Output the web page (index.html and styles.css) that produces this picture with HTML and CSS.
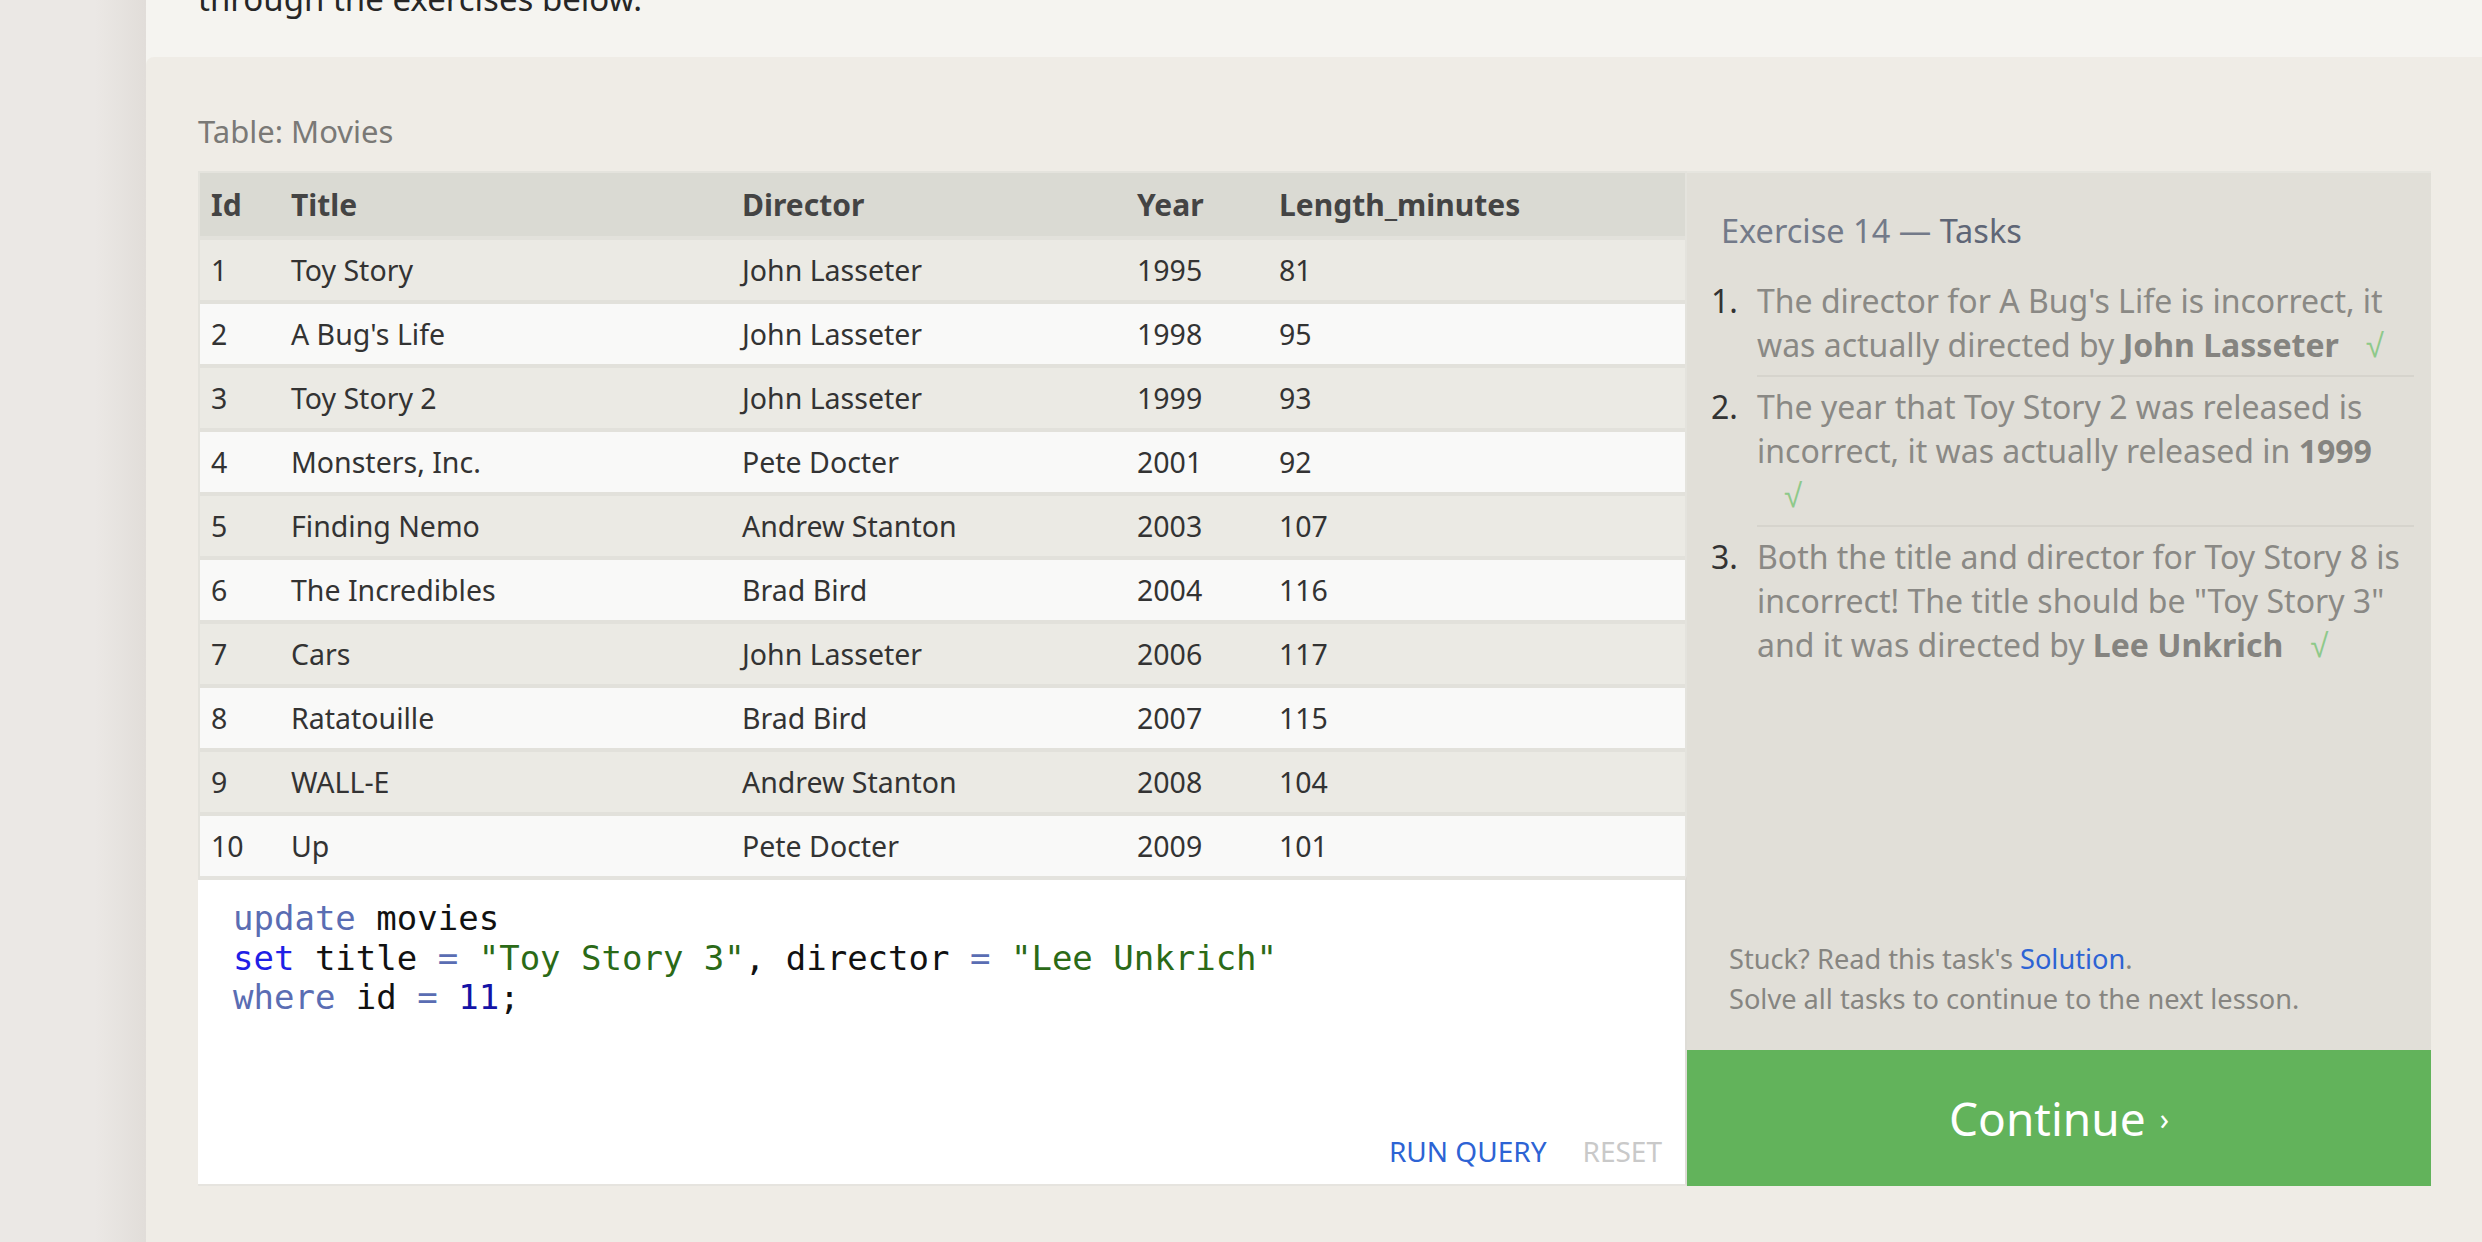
FILE: index.html
```html
<!DOCTYPE html>
<html lang="en">
<head>
<meta charset="utf-8">
<title>SQLBolt - Exercise 14</title>
<link rel="stylesheet" href="styles.css">
</head>
<body>
<div class="page">
  <aside class="sidebar"></aside>
  <main class="main">
    <section class="intro">
      <p>through the exercises below.</p>
    </section>
    <section class="exercise">
      <div class="table-label">Table: Movies</div>
      <div class="workspace">
        <div class="left">
          <table class="movies">
            <thead>
              <tr><th class="c-id">Id</th><th class="c-title">Title</th><th class="c-dir">Director</th><th class="c-year">Year</th><th class="c-len">Length_minutes</th></tr>
            </thead>
            <tbody>
              <tr><td>1</td><td>Toy Story</td><td>John Lasseter</td><td>1995</td><td>81</td></tr>
              <tr><td>2</td><td>A Bug's Life</td><td>John Lasseter</td><td>1998</td><td>95</td></tr>
              <tr><td>3</td><td>Toy Story 2</td><td>John Lasseter</td><td>1999</td><td>93</td></tr>
              <tr><td>4</td><td>Monsters, Inc.</td><td>Pete Docter</td><td>2001</td><td>92</td></tr>
              <tr><td>5</td><td>Finding Nemo</td><td>Andrew Stanton</td><td>2003</td><td>107</td></tr>
              <tr><td>6</td><td>The Incredibles</td><td>Brad Bird</td><td>2004</td><td>116</td></tr>
              <tr><td>7</td><td>Cars</td><td>John Lasseter</td><td>2006</td><td>117</td></tr>
              <tr><td>8</td><td>Ratatouille</td><td>Brad Bird</td><td>2007</td><td>115</td></tr>
              <tr><td>9</td><td>WALL-E</td><td>Andrew Stanton</td><td>2008</td><td>104</td></tr>
              <tr><td>10</td><td>Up</td><td>Pete Docter</td><td>2009</td><td>101</td></tr>
            </tbody>
          </table>
          <div class="editor">
            <pre class="code"><span class="kw">update</span> movies
<span class="kw2">set</span> title <span class="op">=</span> <span class="str">"Toy Story 3"</span>, director <span class="op">=</span> <span class="str">"Lee Unkrich"</span>
<span class="kw">where</span> id <span class="op">=</span> <span class="num">11</span>;</pre>
            <div class="actions">
              <span class="run">RUN QUERY</span>
              <span class="reset">RESET</span>
            </div>
          </div>
        </div>
        <div class="panel">
          <div class="panel-body">
            <h2 class="tasks-title">Exercise 14 — <span class="tasks-word">Tasks</span></h2>
            <ol class="tasks">
              <li><span class="n">1.</span><span class="t">The director for A Bug's Life is incorrect, it was actually directed by <b>John Lasseter</b><span class="check">√</span></span></li>
              <li><span class="n">2.</span><span class="t">The year that Toy Story 2 was released is incorrect, it was actually released in <b>1999</b><span class="check">√</span></span></li>
              <li><span class="n">3.</span><span class="t">Both the title and director for Toy Story 8 is incorrect! The title should be "Toy Story 3" and it was directed by <b>Lee Unkrich</b><span class="check">√</span></span></li>
            </ol>
          </div>
          <div class="help">
            <p>Stuck? Read this task's <a href="#">Solution</a>.</p>
            <p>Solve all tasks to continue to the next lesson.</p>
          </div>
          <a class="continue" href="#">Continue <span class="arrow">›</span></a>
        </div>
      </div>
    </section>
  </main>
</div>
</body>
</html>
```

FILE: styles.css
```css
html, body {
  margin: 0;
  padding: 0;
}

body {
  background: #efece6;
  font-family: "Noto Sans", "Liberation Sans", sans-serif;
  overflow: hidden;
}

.page {
  display: flex;
  min-height: 1242px;
}

.sidebar {
  width: 146px;
  flex: none;
  background: linear-gradient(to right, #ebe8e5 0, #ebe8e5 95px, #e1ddd9 146px);
}

.main {
  flex: 1;
  display: flex;
  flex-direction: column;
  background: #f5f4f0;
}

.intro {
  height: 57px;
  overflow: hidden;
  display: flex;
  align-items: flex-end;
  padding: 0 52px;
}

.intro p {
  margin: 0 0 36px;
  font-size: 33px;
  line-height: 44px;
  color: #262626;
}

.exercise {
  flex: 1;
  background: #efece6;
  border-top-left-radius: 8px;
  padding: 55px 50px 0 52px;
}

.table-label {
  font-size: 31px;
  line-height: 38px;
  color: #7a7976;
  margin-bottom: 21px;
}

.workspace {
  display: flex;
  height: 1015px;
}

.left {
  width: 1489px;
  flex: none;
  display: flex;
  flex-direction: column;
}

/* table */
.movies {
  width: 100%;
  table-layout: fixed;
  border-collapse: separate;
  border-spacing: 0;
  border: 2px solid #e4e3dd;
  border-bottom: none;
  font-size: 28.5px;
  color: #333;
}

.movies th {
  box-sizing: border-box;
  background: #dadad3;
  height: 63px;
  padding: 0 0 0 11px;
  text-align: left;
  font-size: 30px;
  font-weight: bold;
  color: #444;
}

.movies td {
  height: 60px;
  padding: 0 0 0 11px;
  border-top: 4px solid #e2e1db;
  white-space: nowrap;
}

.movies tbody tr:nth-child(odd) td {
  background: #ebeae4;
}

.movies tbody tr:nth-child(even) td {
  background: #f9f9f8;
}

.movies .c-id { width: 80px; }
.movies .c-title { width: 451px; }
.movies .c-dir { width: 395px; }
.movies .c-year { width: 142px; }
.movies .c-len { width: auto; }

/* editor */
.editor {
  flex: 1;
  display: flex;
  flex-direction: column;
  background: #fff;
  border-top: 4px solid #e4e3de;
  border-bottom: 2px solid #e6e4df;
  border-right: 2px solid #dedcd6;
}

.code {
  margin: 0;
  padding: 19px 0 0 35px;
  font-family: "DejaVu Sans Mono", "Liberation Mono", monospace;
  font-size: 34px;
  line-height: 39.5px;
  color: #111;
}

.code .kw { color: #5a6db3; }
.code .kw2 { color: #1f1fe6; }
.code .op { color: #5a6db3; }
.code .str { color: #2b6a17; }
.code .num { color: #1313a6; }

.actions {
  margin-top: auto;
  display: flex;
  justify-content: flex-end;
  gap: 36px;
  padding: 0 23px 16px 0;
  font-size: 28px;
  line-height: 34px;
}

.run { color: #2d63d4; }
.reset { color: #c9c9c9; }

/* panel */
.panel {
  width: 744px;
  flex: none;
  display: flex;
  flex-direction: column;
  background: #e1dfd8;
  border-top: 2px solid #e6e5df;
}

.panel-body {
  flex: 1;
  padding: 36px 17px 0 26px;
}

.tasks-title {
  margin: 0 0 18px 8px;
  font-size: 32.5px;
  line-height: 44px;
  font-weight: normal;
  color: #737a89;
}

.tasks-word { color: #5f6676; }

.tasks {
  list-style: none;
  margin: 0;
  padding: 0;
  font-size: 32px;
  line-height: 44px;
  color: #8a8985;
}

.tasks li {
  display: flex;
  align-items: flex-start;
}

.tasks .n {
  width: 46px;
  flex: none;
  padding-top: 8px;
  margin-left: -2px;
  color: #333;
}

.tasks .t {
  flex: 1;
  padding: 8px 0 8px;
  border-bottom: 2px solid #d6d4cd;
}

.tasks li:last-child .t {
  border-bottom: none;
}

.tasks b {
  color: #858480;
}

.check {
  display: inline-block;
  padding-left: 27px;
  font-family: "Liberation Sans", "DejaVu Sans", sans-serif;
  font-size: 33px;
  line-height: 1;
  color: #8ec98a;
}

.help {
  padding: 0 0 31px 42px;
  font-size: 27.2px;
  line-height: 40px;
  color: #868581;
}

.help p {
  margin: 0;
}

.help a {
  color: #2d63d4;
  text-decoration: none;
}

.continue {
  height: 136px;
  display: flex;
  align-items: center;
  justify-content: center;
  background: #62b35b;
  color: #fff;
  font-size: 46px;
  text-decoration: none;
}

.continue .arrow {
  font-size: 30px;
  margin-left: 14px;
}
```
